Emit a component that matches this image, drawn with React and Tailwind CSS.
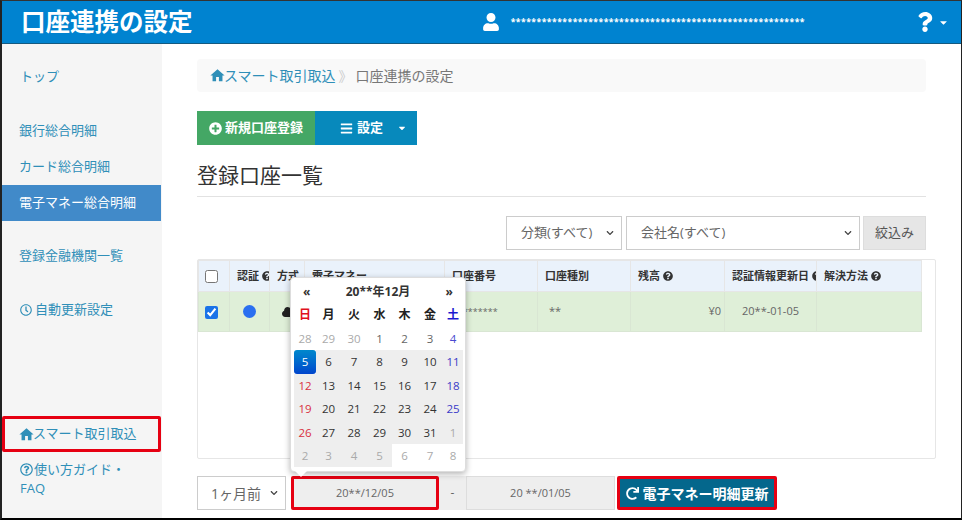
import React from 'react';
import { FaPlusCircle, FaBars, FaUser, FaQuestion, FaQuestionCircle, FaRegQuestionCircle, FaRegClock, FaRedo, FaCloud, FaCaretDown, FaChevronDown } from 'react-icons/fa';
import { MdHome } from 'react-icons/md';

const SANS = 'font-["Open_Sans","Noto_Sans_CJK_JP",sans-serif]';
const STARS = '*'.repeat(57);

const DOW = [
  ['日', 'text-[#e01020]'], ['月', 'text-[#222]'], ['火', 'text-[#222]'], ['水', 'text-[#222]'],
  ['木', 'text-[#222]'], ['金', 'text-[#222]'], ['土', 'text-[#1a1ad0]'],
];

// every visible day of the month grid, in order
const DAYS = [
  28, 29, 30, 1, 2, 3, 4,
  5, 6, 7, 8, 9, 10, 11,
  12, 13, 14, 15, 16, 17, 18,
  19, 20, 21, 22, 23, 24, 25,
  26, 27, 28, 29, 30, 31, 1,
  2, 3, 4, 5, 6, 7, 8,
];

const dayClass = (i) => {
  const col = i % 7;
  const inRange = i >= 7 && i <= 38;
  const muted = i < 3 || i >= 34;
  let color = 'text-[#333]';
  if (muted) color = 'text-[#aaa]';
  else if (i === 3 || i === 4 || i === 5) color = 'text-[#666]';
  else if (col === 0) color = 'text-[#d9303f]';
  else if (col === 6) color = 'text-[#3a3ac8]';
  if (i === 6) color = 'text-[#4a4ad0]';
  return `${inRange ? 'bg-[#eeeeee]' : ''} ${color}`;
};

const NavLink = ({ children, className = '' }) => (
  <a className={`flex items-center text-[13px] text-[#2f8fb8] ${className}`}>{children}</a>
);

const Th = ({ children, className = '' }) => (
  <th className={`border border-[#e6e6e6] bg-[#eaf2fb] px-[7px] text-left text-[11px] font-bold text-[#333] overflow-hidden whitespace-nowrap ${className}`}>
    {children}
  </th>
);

const Td = ({ children, className = '' }) => (
  <td className={`border border-[#d9e6d3] bg-[#dfefd8] px-[8px] text-[11px] text-[#666] ${className}`}>{children}</td>
);

const Calendar = () => (
  <div className="absolute left-[93px] top-[-199px] z-10 w-[176px] h-[195px] rounded-[4px] bg-white border border-[#dddddd] shadow-[0_2px_6px_rgba(0,0,0,0.3)] px-[3px]">
    <div className="flex h-[24px] items-center justify-between px-[9px] pt-[4px] text-[12px] font-bold text-[#333]">
      <span>«</span>
      <span>20**年12月</span>
      <span>»</span>
    </div>
    <div className="grid grid-cols-[22px_25px_26px_25px_25px_26px_20px] text-center">
      {DOW.map(([d, c]) => (
        <div key={d} className={`flex h-[25px] items-center justify-center pt-[1px] text-[12px] font-bold ${c}`}>{d}</div>
      ))}
      {DAYS.map((d, i) =>
        i === 7 ? (
          <div key={i} className="flex h-[23.4px] items-center justify-center rounded-[3px] bg-gradient-to-b from-[#0088cc] to-[#0044cc] text-[11.5px] text-white">
            {d}
          </div>
        ) : (
          <div key={i} className={`flex h-[23.4px] items-center justify-center text-[11.5px] ${dayClass(i)}`}>{d}</div>
        )
      )}
    </div>
    <div className="absolute bottom-[-6px] left-[4px] h-0 w-0 border-x-[6px] border-t-[6px] border-x-transparent border-t-white" />
  </div>
);

export default function App() {
  return (
    <div className={`${SANS} flex h-[520px] w-[962px] flex-col overflow-hidden border-t border-l-2 border-r border-b-2 border-t-[#333] border-l-[#222] border-r-[#222] border-b-black bg-white`}>
      {/* Header */}
      <header className="flex h-[43px] shrink-0 items-center justify-between border-b border-b-[#155a80] bg-[#0083d0] text-white">
        <h1 className="ml-[19px] text-[24.5px] font-bold leading-none">口座連携の設定</h1>
        <div className="flex items-center">
          <FaUser className="mr-[11px] text-[18px]" />
          <span className="mr-[110px] text-[8.6px] font-bold tracking-[0.48px]">{STARS}</span>
          <FaQuestion className="text-[20px]" />
          <FaCaretDown className="ml-[3px] mr-[12px] text-[11px]" />
        </div>
      </header>

      <div className="flex min-h-0 flex-1">
        {/* Sidebar */}
        <aside className="flex w-[160px] shrink-0 flex-col bg-[#f5f5f5]">
          <NavLink className="mt-[23px] h-[20px] pl-[18px]">トップ</NavLink>
          <NavLink className="mt-[34px] h-[20px] pl-[17px]">銀行総合明細</NavLink>
          <NavLink className="mt-[16px] h-[20px] pl-[17px]">カード総合明細</NavLink>
          <NavLink className="mt-[8px] mr-px h-[36px] bg-[#418ac9] pl-[17px] !text-white">電子マネー総合明細</NavLink>
          <NavLink className="mt-[25px] h-[20px] pl-[17px]">登録金融機関一覧</NavLink>
          <NavLink className="mt-[34px] h-[20px] pl-[18px]">
            <FaRegClock className="mr-[3px] text-[12px]" />自動更新設定
          </NavLink>
          <NavLink className="mt-[96px] mr-px h-[36px] rounded-[2px] border-[3px] border-[#e60012] pl-[13px]">
            <MdHome className="mr-[-2px] text-[17px]" />スマート取引取込
          </NavLink>
          <div className="mt-[8px] pl-[18px] text-[13px] leading-[19px] text-[#2f8fb8]">
            <div className="flex items-center">
              <FaRegQuestionCircle className="mr-[1px] text-[13px]" />使い方ガイド・
            </div>
            <div>FAQ</div>
          </div>
        </aside>

        {/* Main */}
        <main className="relative min-w-0 flex-1 pl-[35px] pr-[35px] text-[#333]">
          <div className="mt-[15px] flex h-[33px] items-center rounded-[4px] bg-[#f9f9f9] pl-[12px] text-[14px]">
            <MdHome className="mr-[-2px] text-[17px] text-[#2f8fb8]" />
            <span className="text-[#2f8fb8]">スマート取引取込</span>
            <span className="mx-[3px] text-[#ccc]">》</span>
            <span className="text-[#777]">口座連携の設定</span>
          </div>

          <div className="mt-[19px] flex h-[34px] text-[13px] font-bold text-white">
            <button className="flex w-[118px] items-center justify-center bg-[#44a765]">
              <FaPlusCircle className="mr-[3px] text-[13px]" />新規口座登録
            </button>
            <button className="flex w-[102px] items-center bg-[#0789bc] pl-[25px]">
              <FaBars className="mr-[4px] text-[13px]" />設定
              <FaCaretDown className="ml-[14px] text-[10px]" />
            </button>
          </div>

          <h2 className="mt-[15px] h-[37px] border-b border-b-[#e2e2e2] text-[21px] font-normal leading-[30px] text-[#333]">登録口座一覧</h2>

          <div className="mt-[19px] flex h-[34px] justify-end text-[13px] text-[#666]">
            <div className="flex w-[116px] items-center justify-between border border-[#ccc] pl-[14px] pr-[7px]">
              分類(すべて)<FaChevronDown className="text-[8px] text-[#444]" />
            </div>
            <div className="ml-[4px] flex w-[234px] items-center justify-between border border-[#ccc] pl-[14px] pr-[7px]">
              会社名(すべて)<FaChevronDown className="text-[8px] text-[#444]" />
            </div>
            <button className="ml-[3px] w-[63px] border border-[#ddd] bg-[#e6e6e6] text-[#555]">絞込み</button>
          </div>

          <div className="mt-[9px] mr-[-10px] h-[200px] border border-[#e6e6e6] rounded-[2px]">
            <table className="w-[723px] table-fixed border-collapse">
              <colgroup>
                <col className="w-[31px]" /><col className="w-[40px]" /><col className="w-[35px]" /><col className="w-[140px]" />
                <col className="w-[93px]" /><col className="w-[93px]" /><col className="w-[94px]" /><col className="w-[92px]" /><col className="w-[105px]" />
              </colgroup>
              <thead>
                <tr className="h-[31px]">
                  <Th className="!px-0 !text-left">
                    <input type="checkbox" readOnly className="ml-[6px] align-middle h-[13px] w-[13px]" />
                  </Th>
                  <Th><span className="flex items-center">認証<FaQuestionCircle className="ml-[3px] shrink-0 text-[10px]" /></span></Th>
                  <Th>方式</Th>
                  <Th>電子マネー</Th>
                  <Th>口座番号</Th>
                  <Th>口座種別</Th>
                  <Th><span className="flex items-center">残高<FaQuestionCircle className="ml-[3px] text-[10px]" /></span></Th>
                  <Th><span className="flex items-center">認証情報更新日<FaQuestionCircle className="ml-[3px] shrink-0 text-[10px]" /></span></Th>
                  <Th><span className="flex items-center">解決方法<FaQuestionCircle className="ml-[3px] text-[10px]" /></span></Th>
                </tr>
              </thead>
              <tbody>
                <tr className="h-[40px]">
                  <Td className="!px-0">
                    <input type="checkbox" checked readOnly className="ml-[6px] align-middle h-[13px] w-[13px] accent-[#1a73e8]" />
                  </Td>
                  <Td className="!px-0"><div className="mx-auto h-[13px] w-[13px] rounded-full bg-[#2a6ff0]" /></Td>
                  <Td className="!px-0"><FaCloud className="ml-[12px] text-[14px] text-[#222]" /></Td>
                  <Td />
                  <Td className="whitespace-nowrap !text-[9px]">*********</Td>
                  <Td className="pl-[11px]">**</Td>
                  <Td className="text-right !pr-[3px]">¥0</Td>
                  <Td className="text-center">20**-01-05</Td>
                  <Td />
                </tr>
              </tbody>
            </table>
          </div>

          <div className="relative mt-[17px] flex h-[34px] text-[12px] text-[#666]">
            <Calendar />
            <div className="flex w-[89px] items-center justify-between border border-[#ccc] pl-[13px] pr-[7px] text-[14px]">
              1ヶ月前<FaChevronDown className="text-[8px] text-[#444]" />
            </div>
            <div className="ml-[5px] flex w-[148px] items-center justify-center rounded-[2px] border-[3px] border-[#e60012] bg-[#eeeeee] text-[11px]">20**/12/05</div>
            <div className="flex w-[27px] items-center justify-center bg-[#eeeeee]">-</div>
            <div className="flex w-[149px] items-center justify-center border border-[#ddd] bg-[#eeeeee] text-[11px]">20 **/01/05</div>
            <button className="ml-[2px] flex w-[160px] items-center justify-center rounded-[2px] border-[3px] border-[#e60012] bg-[#04678c] text-[14px] font-bold text-white">
              <FaRedo className="mr-[4px] text-[13px]" />電子マネー明細更新
            </button>
          </div>
        </main>
      </div>
    </div>
  );
}
